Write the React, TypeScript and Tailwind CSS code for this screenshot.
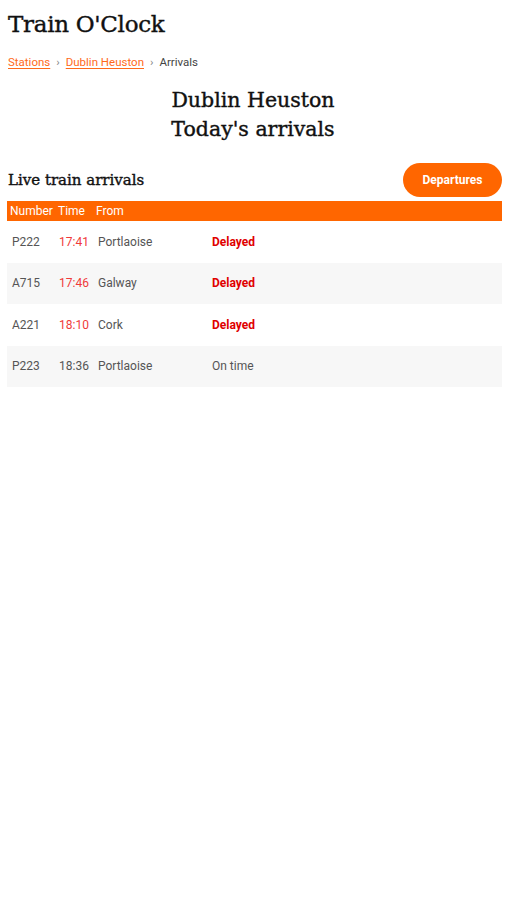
const rows = [
  { num: "P222", time: "17:41", from: "Portlaoise", status: "Delayed" },
  { num: "A715", time: "17:46", from: "Galway", status: "Delayed" },
  { num: "A221", time: "18:10", from: "Cork", status: "Delayed" },
  { num: "P223", time: "18:36", from: "Portlaoise", status: "On time" },
];

const serif = "font-['DejaVu_Serif',serif] [-webkit-text-stroke:0.4px_#111]";

export default function App() {
  return (
    <div className="min-h-[900px] bg-white font-['Roboto',sans-serif] text-[#222]">
      <header className="px-2 pt-[10px]">
        <h1 className={`${serif} text-[23px] leading-[28px] tracking-[-0.3px] text-[#111]`}>
          Train O'Clock
        </h1>
        <nav className="mt-[17px] flex items-center gap-[6px] text-[11.5px] leading-[14px]">
          <a className="text-[#ff6a1a] underline underline-offset-2">Stations</a>
          <span className="text-[#888]">›</span>
          <a className="text-[#ff6a1a] underline underline-offset-2">Dublin Heuston</a>
          <span className="text-[#888]">›</span>
          <span className="text-[#444]">Arrivals</span>
        </nav>
      </header>

      <div className={`${serif} mt-[17px] text-center text-[20.5px] leading-[29px] text-[#111]`}>
        <div>Dublin Heuston</div>
        <div>Today's arrivals</div>
      </div>

      <div className="mt-[19px] flex items-center justify-between pl-2 pr-1">
        <h2 className={`${serif} text-[15px] text-[#111]`}>Live train arrivals</h2>
        <button className="h-[34px] w-[99px] rounded-full bg-[#ff6600] text-[12px] font-bold text-white">
          Departures
        </button>
      </div>

      <section className="ml-[7px] mr-1 mt-[4px]">
        <div className="flex h-[20px] items-center bg-[#ff6600] text-[12px] text-white">
          <span className="w-[51px] pl-[3px]">Number</span>
          <span className="w-[38px]">Time</span>
          <span>From</span>
        </div>
        {rows.map((r, i) => {
          const late = r.status === "Delayed";
          return (
            <div
              key={r.num}
              className={`flex h-[41.5px] items-center text-[12px] text-[#555] ${
                i % 2 === 1 ? "bg-[#f7f7f7]" : "bg-white"
              }`}
            >
              <span className="w-[52px] pl-[5px]">{r.num}</span>
              <span className={`w-[39px] ${late ? "text-[#f03a3a]" : ""}`}>{r.time}</span>
              <span className="w-[114px]">{r.from}</span>
              <span className={late ? "font-bold text-[#e00000]" : ""}>{r.status}</span>
            </div>
          );
        })}
      </section>
    </div>
  );
}
